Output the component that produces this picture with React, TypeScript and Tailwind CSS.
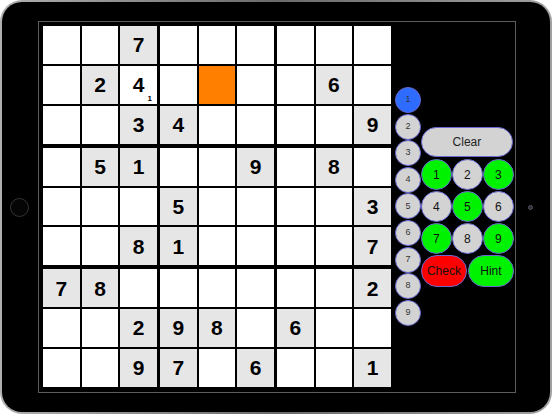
import React from 'react'

// givens, row by row ('.' = empty)
const GIVENS = [
  '..7......',
  '.2.....6.',
  '..34....9',
  '.51..9.8.',
  '...5....3',
  '..81....7',
  '78......2',
  '..298.6..',
  '..97.6..1',
]

const ENTRIES: Record<string, { value: string; note?: string }> = {
  '1-2': { value: '4', note: '1' },
}

const SELECTED = '1-4'

function Cell({ r, c }: { r: number; c: number }) {
  const key = `${r}-${c}`
  const given = GIVENS[r][c] !== '.' ? GIVENS[r][c] : null
  const entry = ENTRIES[key]
  const bg = key === SELECTED ? 'bg-[#ff8000]' : given ? 'bg-[#e6e6e6]' : 'bg-white'

  return (
    <div
      className={`relative w-[36.67px] h-[37.9px] flex items-center justify-center text-[21px] font-bold text-black ${bg}`}
    >
      {given ?? entry?.value}
      {entry?.note && (
        <span className="absolute right-[5px] bottom-[1px] text-[8px] leading-none font-bold">
          {entry.note}
        </span>
      )}
    </div>
  )
}

function Board() {
  return (
    <div className="grid grid-cols-3 gap-x-[3px] gap-y-[4px] bg-black">
      {[0, 1, 2].map(br =>
        [0, 1, 2].map(bc => (
          <div key={`${br}${bc}`} className="grid grid-cols-3 gap-[2px]">
            {[0, 1, 2].map(i =>
              [0, 1, 2].map(j => (
                <Cell key={`${i}${j}`} r={br * 3 + i} c={bc * 3 + j} />
              ))
            )}
          </div>
        ))
      )}
    </div>
  )
}

function NoteColumn() {
  return (
    <div className="flex flex-col gap-[0.6px] mt-[65px] ml-[4px]">
      {[1, 2, 3, 4, 5, 6, 7, 8, 9].map(n => (
        <div
          key={n}
          className={`w-[26px] h-[26px] rounded-full border border-[#6868d0] flex items-center justify-center text-[9px] text-[#333] ${
            n === 1 ? 'bg-[#2d6cff]' : 'bg-[#d3d3d3]'
          }`}
        >
          {n}
        </div>
      ))}
    </div>
  )
}

function Pad() {
  return (
    <div className="flex flex-col mt-[105px] w-[93px]">
      <button className="w-[92px] h-[30px] mb-[2px] rounded-full bg-[#d3d3d3] border border-[#6868d0] text-[12px] text-[#222]">
        Clear
      </button>
      <div className="grid grid-cols-3 gap-y-[1px]">
        {[1, 2, 3, 4, 5, 6, 7, 8, 9].map(n => (
          <div
            key={n}
            className={`w-[31px] h-[31px] rounded-full border border-[#6868d0] flex items-center justify-center text-[12px] text-[#111] ${
              n % 2 === 1 ? 'bg-[#00f200]' : 'bg-[#d3d3d3]'
            }`}
          >
            {n}
          </div>
        ))}
      </div>
      <div className="flex gap-[1px] mt-[1px]">
        <button className="w-[46px] h-[32px] rounded-full bg-[#ff0000] border border-[#6868d0] text-[12px] text-[#111]">
          Check
        </button>
        <button className="w-[46px] h-[32px] rounded-full bg-[#00f200] border border-[#6868d0] text-[12px] text-[#111]">
          Hint
        </button>
      </div>
    </div>
  )
}

export default function App() {
  return (
    <div className="w-[552px] h-[414px] bg-white font-['Liberation_Sans',Arial,sans-serif]">
      <div className="w-full h-full rounded-[22px] p-[2px] bg-gradient-to-r from-[#b0b0b0] via-[#6a6a6a] to-[#a0a0a0]">
        <div className="w-full h-full rounded-[20px] bg-black flex">
          {/* left bezel with home button */}
          <div className="w-[36px] flex items-center justify-center">
            <div className="w-[19px] h-[19px] rounded-full border border-[#333] bg-[#050505] -ml-[1px]" />
          </div>

          {/* screen */}
          <div className="mt-[19px] w-[478px] h-[372px] border border-[#5c5c5c] bg-black flex items-start">
            <div className="ml-[4px] mt-[4px]">
              <Board />
            </div>
            <NoteColumn />
            <Pad />
          </div>

          {/* right bezel with camera */}
          <div className="flex-1 flex items-center">
            <div className="ml-[12px] w-[5px] h-[5px] rounded-full bg-[#2c2c44] border border-[#555]" />
          </div>
        </div>
      </div>
    </div>
  )
}
